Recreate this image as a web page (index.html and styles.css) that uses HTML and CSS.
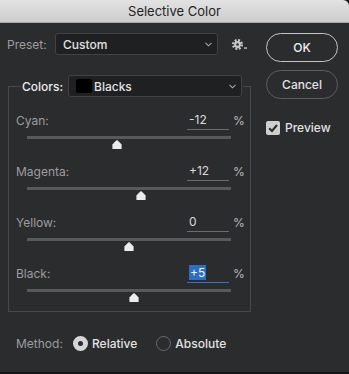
FILE: index.html
```html
<!DOCTYPE html>
<html lang="en">
<head>
  <meta charset="UTF-8">
  <title>Selective Color</title>
  <link rel="stylesheet" href="styles.css">
</head>
<body>

<div class="window">
  <div class="titlebar">Selective Color</div>

  <div class="main">
    <div class="left">
      <div class="preset-row">
        <span class="label preset-label">Preset:</span>
        <div class="dropdown preset-dropdown">
          <span class="dropdown-text">Custom</span>
          <svg class="chevron" width="7" height="5" viewBox="0 0 7 5"><path d="M0.5 0.8 L3.5 3.8 L6.5 0.8" fill="none" stroke="#a8a8a8" stroke-width="1.1"/></svg>
        </div>
        <svg class="gear" width="16" height="12" viewBox="0 0 16 12">
          <circle cx="5.5" cy="5.5" r="4.3" fill="none" stroke="#c9c9c9" stroke-width="2.4" stroke-dasharray="1.9 1.48"/>
          <circle cx="5.5" cy="5.5" r="3.4" fill="#c9c9c9"/>
          <circle cx="5.5" cy="5.5" r="1.3" fill="#2b2c2e"/>
          <rect x="12" y="8.4" width="3" height="1.3" fill="#c9c9c9"/>
        </svg>
      </div>

      <fieldset class="colors-group">
        <legend class="colors-legend">
          <span class="legend-inner">
            <span class="legend-label">Colors:</span>
            <span class="dropdown colors-dropdown">
              <span class="swatch"></span>
              <span class="dropdown-text">Blacks</span>
              <svg class="chevron" width="7" height="5" viewBox="0 0 7 5"><path d="M0.5 0.8 L3.5 3.8 L6.5 0.8" fill="none" stroke="#a8a8a8" stroke-width="1.1"/></svg>
            </span>
          </span>
        </legend>

        <div class="slider-row">
          <div class="slider-head">
            <span class="label">Cyan:</span>
            <span class="value-box">-12</span>
            <span class="percent">%</span>
          </div>
          <div class="track"></div>
          <div class="thumb-line"><svg class="thumb" style="--v: -12" width="10" height="9" viewBox="0 0 10 9"><path d="M4.2 0.6 Q5 -0.1 5.8 0.6 L9.6 4.4 L9.6 9 L0.4 9 L0.4 4.4 Z" fill="#ececec"/></svg></div>
        </div>

        <div class="slider-row">
          <div class="slider-head">
            <span class="label">Magenta:</span>
            <span class="value-box">+12</span>
            <span class="percent">%</span>
          </div>
          <div class="track"></div>
          <div class="thumb-line"><svg class="thumb" style="--v: 12" width="10" height="9" viewBox="0 0 10 9"><path d="M4.2 0.6 Q5 -0.1 5.8 0.6 L9.6 4.4 L9.6 9 L0.4 9 L0.4 4.4 Z" fill="#ececec"/></svg></div>
        </div>

        <div class="slider-row">
          <div class="slider-head">
            <span class="label">Yellow:</span>
            <span class="value-box">0</span>
            <span class="percent">%</span>
          </div>
          <div class="track"></div>
          <div class="thumb-line"><svg class="thumb" style="--v: 0" width="10" height="9" viewBox="0 0 10 9"><path d="M4.2 0.6 Q5 -0.1 5.8 0.6 L9.6 4.4 L9.6 9 L0.4 9 L0.4 4.4 Z" fill="#ececec"/></svg></div>
        </div>

        <div class="slider-row">
          <div class="slider-head">
            <span class="label">Black:</span>
            <span class="value-box active"><span class="selected">+5</span></span>
            <span class="percent">%</span>
          </div>
          <div class="track"></div>
          <div class="thumb-line"><svg class="thumb" style="--v: 5" width="10" height="9" viewBox="0 0 10 9"><path d="M4.2 0.6 Q5 -0.1 5.8 0.6 L9.6 4.4 L9.6 9 L0.4 9 L0.4 4.4 Z" fill="#ececec"/></svg></div>
        </div>
      </fieldset>
    </div>

    <div class="side">
      <div class="button default-button">OK</div>
      <div class="button">Cancel</div>
      <div class="preview">
        <span class="checkbox">
          <svg width="14" height="14" viewBox="0 0 14 14"><path d="M3.2 7.2 L6 10 L11 4" fill="none" stroke="#2a2a2a" stroke-width="2"/></svg>
        </span>
        <span class="preview-text">Preview</span>
      </div>
    </div>
  </div>

  <div class="method-row">
    <span class="label method-label">Method:</span>
    <span class="radio checked"></span>
    <span class="radio-text">Relative</span>
    <span class="radio"></span>
    <span class="radio-text">Absolute</span>
  </div>
</div>

</body>
</html>
```

FILE: styles.css
```css
:root {
  --bg: #2b2c2e;
  --field-bg: #1f2022;
  --field-border: #414244;
  --label: #9d9d9d;
  --text: #e2e2e2;
  --track: #58595b;
  --blue: #2f6dc0;
}

* {
  margin: 0;
  padding: 0;
  box-sizing: border-box;
}

html, body {
  height: 100%;
  background: #141414;
  font-family: Inter, "Liberation Sans", Arial, sans-serif;
  font-size: 12px;
  color: var(--text);
  overflow: hidden;
}

.window {
  width: 349px;
  height: 372px;
  background: var(--bg);
  border-top-right-radius: 6px;
  overflow: hidden;
}

.titlebar {
  height: 23px;
  background: linear-gradient(#e2e2e2, #cdcdcd);
  border-bottom: 1px solid #a9a9a9;
  color: #242424;
  font-size: 13px;
  line-height: 22px;
  text-align: center;
}

.main {
  display: flex;
  padding-top: 10px;
}

.left {
  width: 251px;
}

.label {
  color: var(--label);
}

/* preset row */
.preset-row {
  display: flex;
  align-items: center;
  height: 22px;
  padding-left: 7px;
}

.preset-label {
  width: 48px;
}

.dropdown {
  display: flex;
  align-items: center;
  height: 22px;
  background: var(--field-bg);
  border: 1px solid var(--field-border);
  border-radius: 3px;
  padding-left: 7px;
  padding-right: 5px;
}

.dropdown-text {
  flex-grow: 1;
  color: var(--text);
  font-weight: 500;
}

.chevron {
  flex-shrink: 0;
}

.preset-dropdown {
  width: 163px;
}

.gear {
  margin-left: 14px;
  margin-top: 1px;
}

/* colors group */
.colors-group {
  margin: 20px 0 0 8px;
  width: 243px;
  border: 1px solid #47484a;
  padding: 13px 9px 8px 7px;
  min-inline-size: 0;
}

.colors-legend {
  margin-left: 5px;
  padding: 0 1px;
}

.legend-inner {
  display: flex;
  align-items: center;
}

.legend-label {
  color: #ececec;
  font-weight: 500;
  width: 46px;
}

.colors-dropdown {
  width: 174px;
  padding-left: 7px;
}

.swatch {
  width: 16px;
  height: 14px;
  background: #000;
  border-radius: 2px;
  margin-right: 2px;
}

.slider-row {
  margin-bottom: 11px;
}

.slider-row:last-child {
  margin-bottom: 0;
}

.slider-head {
  display: flex;
  align-items: center;
  height: 20px;
}

.slider-head .label {
  flex-grow: 1;
}

.value-box {
  width: 42px;
  height: 20px;
  line-height: 19px;
  padding-left: 2px;
  border-bottom: 1px solid #6b6c6e;
  color: #dadada;
}

.value-box.active {
  border-bottom-color: #3b6fc0;
}

.selected {
  display: inline-block;
  background: var(--blue);
  color: #f0f0f0;
  line-height: 15px;
  padding: 0 1px;
  margin-top: 2px;
  vertical-align: top;
}

.percent {
  width: 8px;
  margin-left: 4px;
  color: #bdbdbd;
}

.track {
  height: 3px;
  margin: 6px 10px 0 11px;
  background: var(--track);
}

.thumb-line {
  height: 10px;
  margin: 1px 10px 0 11px;
}

.thumb {
  display: block;
  margin-left: calc(50% - 5px + var(--v) * 1px);
}

/* side buttons */
.side {
  margin-left: 15px;
  width: 72px;
}

.button {
  height: 29px;
  border: 1px solid #5c5d5f;
  border-radius: 15px;
  text-align: center;
  line-height: 27px;
  color: var(--text);
  font-weight: 500;
  margin-bottom: 8px;
}

.default-button {
  border-color: #c4c4c4;
  color: #f2f2f2;
}

.preview {
  display: flex;
  align-items: center;
  margin-top: 21px;
}

.checkbox {
  width: 14px;
  height: 14px;
  background: #cfcfcf;
  border-radius: 2px;
  margin-right: 5px;
}

.checkbox svg {
  display: block;
}

.preview-text {
  font-weight: 500;
}

/* method row */
.method-row {
  display: flex;
  align-items: center;
  margin-top: 24px;
  padding-left: 16px;
  height: 15px;
}

.method-label {
  width: 57px;
}

.radio {
  width: 15px;
  height: 15px;
  border-radius: 50%;
  border: 1px solid #6a6b6d;
  margin-right: 4px;
}

.radio.checked {
  border: 5px solid #d6d6d6;
  background: #2b2c2e;
}

.radio-text {
  font-weight: 500;
  margin-right: 19px;
}
```
